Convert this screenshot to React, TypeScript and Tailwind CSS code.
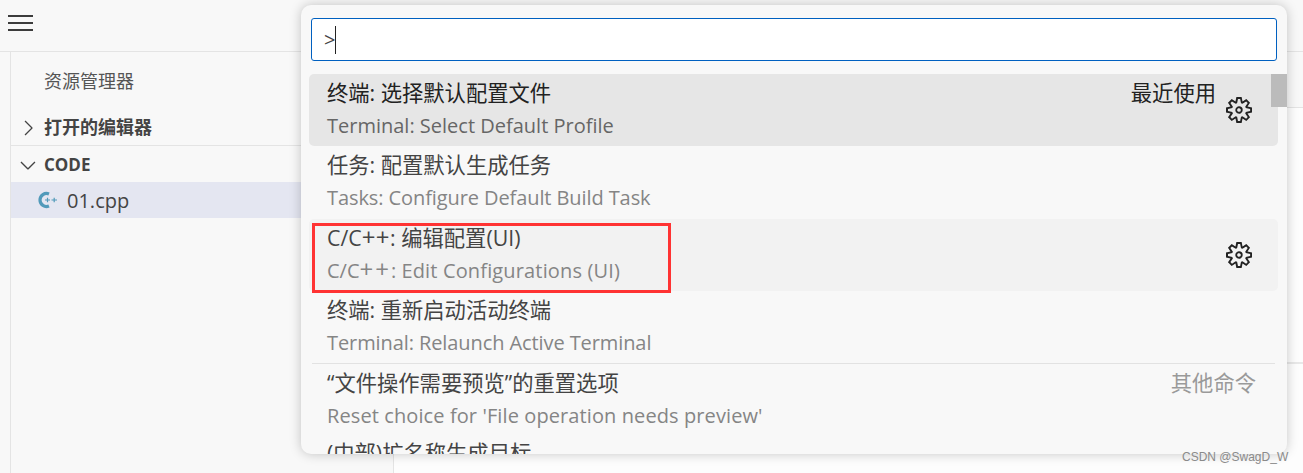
import React from "react";
import { VscSettingsGear, VscChevronRight, VscChevronDown } from "react-icons/vsc";

interface Command {
  title: React.ReactNode;
  detail: React.ReactNode;
  tag?: string;
  active?: boolean;
  hover?: boolean;
  gear?: boolean;
}

const commands: Command[] = [
  { title: "终端: 选择默认配置文件", detail: "Terminal: Select Default Profile", tag: "最近使用", active: true, gear: true },
  {
    title: "任务: 配置默认生成任务",
    detail: <span className="tracking-[-0.09px]">Tasks: Configure Default Build Task</span>,
  },
  {
    title: (
      <>
        C/C<span className="text-[24px] leading-none tracking-[0.5px]">++</span>: 编辑配置(UI)
      </>
    ),
    detail: (
      <>
        C/C<span className="text-[24px] leading-none tracking-[2px]">++</span>:{" "}
        <span className="tracking-[0.15px]">Edit Configurations (UI)</span>
      </>
    ),
    hover: true,
    gear: true,
  },
  {
    title: "终端: 重新启动活动终端",
    detail: <span className="tracking-[-0.09px]">Terminal: Relaunch Active Terminal</span>,
  },
];

const font = "font-['Open_Sans','Noto_Sans_CJK_SC',sans-serif]";

const CommandRow: React.FC<{ cmd: Command }> = ({ cmd }) => (
  <div
    className={`relative h-[72.3px] rounded-[5px] pl-[18px] pt-[4px] ${
      cmd.active ? "bg-[#e6e6e6]" : cmd.hover ? "bg-[#f2f2f2]" : ""
    }`}
  >
    <div className={`text-[21.3px] leading-[30px] ${cmd.active ? "text-[#222222]" : "text-[#444444]"}`}>{cmd.title}</div>
    <div className={`mt-[3px] text-[20px] leading-[30px] ${cmd.active ? "text-[#666666]" : "text-[#858585]"}`}>
      {cmd.detail}
    </div>
    {cmd.tag && (
      <div className="absolute right-[62px] top-[4px] text-[21.3px] leading-[30px] text-[#222222]">{cmd.tag}</div>
    )}
    {cmd.gear && <VscSettingsGear size={26} className="absolute right-[26px] top-[23px] text-[#222222]" />}
  </div>
);

const App: React.FC = () => {
  return (
    <div className={`relative flex h-[473px] w-[1303px] flex-col overflow-hidden bg-[#f8f8f8] ${font}`}>
      {/* top bar */}
      <div className="flex h-[52px] shrink-0 items-start border-b border-[#e4e4e4] pl-[8px] pt-[15px]">
        <div className="flex w-[25px] flex-col gap-[5px]">
          <div className="h-[2px] bg-[#3c3c3c]" />
          <div className="h-[2px] bg-[#3c3c3c]" />
          <div className="h-[2px] bg-[#3c3c3c]" />
        </div>
      </div>

      <div className="flex flex-1">
        <div className="w-[11px] shrink-0 border-r border-[#e4e4e4]" />

        {/* explorer */}
        <div className="w-[383px] shrink-0 border-r border-[#e4e4e4] text-[#444444]">
          <div className="flex h-[58px] items-center pl-[33px] text-[18px] text-[#555555]">资源管理器</div>
          <div className="flex h-[36px] items-center border-b border-[#e4e4e4] pl-[5px] text-[18px] font-bold">
            <VscChevronRight size={24} className="mr-[4px]" />
            打开的编辑器
          </div>
          <div className="flex h-[36px] items-center pl-[5px] pt-[1px] text-[17px] font-bold">
            <VscChevronDown size={24} className="mr-[4px]" />
            CODE
          </div>
          <div className="flex h-[36px] items-center bg-[#e4e6f1] pl-[27px] pt-[2px] text-[20px] leading-none">
            <svg width="20" height="20" viewBox="0 0 20 20" className="mr-[9px] mb-[2px] shrink-0">
              <path d="M11 4A6.5 6.5 0 1 0 11 16" fill="none" stroke="#519aba" strokeWidth="3.2" />
              <path d="M7 10h5M9.5 7.8v4.4M13.5 10h5.5M16.2 7.8v4.4" fill="none" stroke="#519aba" strokeWidth="1.2" />
            </svg>
            01.cpp
          </div>
        </div>

        {/* editor area */}
        <div className="flex-1 bg-[#fdfdfd]">
          <div className="h-[56px] border-b border-[#e4e4e4] bg-[#f8f8f8]" />
          <div className="mt-[254px] border-t-2 border-[#e8e8e8]" />
        </div>
      </div>

      {/* command palette */}
      <div className="absolute left-[301px] top-[5px] flex h-[449px] w-[986px] flex-col overflow-hidden rounded-[10px] bg-[#f8f8f8] shadow-[0_0_12px_rgba(0,0,0,0.22)]">
        <div className="mx-[10px] mt-[13px] flex h-[43px] shrink-0 items-center rounded-[3px] border border-[#0060c0] bg-white pl-[12px] text-[20px] text-[#444444]">
          <span>&gt;</span>
          <span className="h-[28px] w-px bg-[#222222]" />
        </div>

        <div className="relative mt-[13px] flex-1 overflow-hidden pl-[8px] pr-[9px]">
          {commands.map((cmd, i) => (
            <CommandRow key={i} cmd={cmd} />
          ))}
          <div className="mx-[3px] border-t border-[#e2e2e2]" />
          <div className="relative h-[72px] pl-[18px] pt-[4px]">
            <div className="text-[21.3px] leading-[30px] text-[#444444]">“文件操作需要预览”的重置选项</div>
            <div className="mt-[3px] text-[20px] leading-[30px] tracking-[0.1px] text-[#858585]">
              Reset choice for &#39;File operation needs preview&#39;
            </div>
            <div className="absolute right-[22px] top-[4px] text-[21.3px] leading-[30px] text-[#9a9a9a]">其他命令</div>
          </div>
          <div className="pl-[18px] pt-[2px] text-[21.3px] leading-[30px] text-[#444444]">(中部)扩名称生成目标</div>
          {/* scrollbar */}
          <div className="absolute right-0 top-0 h-[33px] w-[16px] bg-[#bbbbbb]" />
        </div>
      </div>

      {/* red annotation */}
      <div className="absolute left-[312px] top-[223px] h-[70px] w-[359px] border-[3px] border-[#ff3333]" />

      {/* watermark */}
      <div className="absolute left-[1182px] top-[449px] font-['Liberation_Sans',sans-serif] text-[12px] leading-[16px] text-[#8a8a8a]">
        CSDN @SwagD_W
      </div>
    </div>
  );
};

export default App;
